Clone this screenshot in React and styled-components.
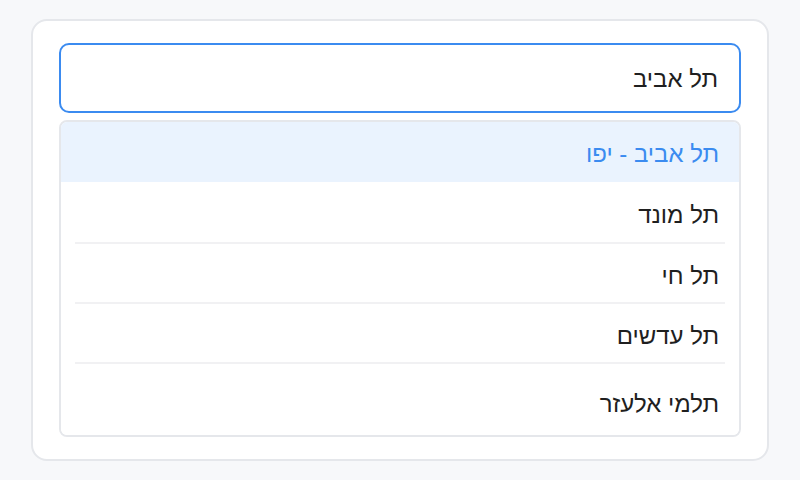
import React from 'react';
import styled, { createGlobalStyle } from 'styled-components';

const GlobalStyle = createGlobalStyle`
  html, body {
    margin: 0;
    padding: 0;
    background: #f7f8fa;
    font-family: 'Liberation Sans', Arial, sans-serif;
  }
  * { box-sizing: border-box; }
`

const Page = styled.div`
  width: 800px;
  height: 480px;
  padding: 19px 31px;
`

const Card = styled.div`
  background: #ffffff;
  border: 2px solid #e5e7eb;
  border-radius: 16px;
  padding: 22px 26px;
  display: flex;
  flex-direction: column;
  gap: 7px;
`

const Field = styled.div`
  height: 70px;
  border: 2px solid #3b8bf0;
  border-radius: 10px;
  display: flex;
  align-items: center;
  padding: 2px 21px 0;
  font-size: 24px;
  color: #1f1f1f;
  direction: rtl;
`

const List = styled.ul`
  list-style: none;
  margin: 0;
  padding: 0;
  border: 2px solid #e5e7eb;
  border-radius: 8px;
  overflow: hidden;
  direction: rtl;
`

const Item = styled.li`
  height: ${p => p.$h}px;
  display: flex;
  align-items: center;
  padding: ${p => p.$pt}px 20px 0;
  font-size: 24px;
  color: ${p => (p.$active ? '#3b8bf0' : '#1f1f1f')};
  background: ${p => (p.$active ? '#eaf3fe' : '#ffffff')};
`

const Divider = styled.li`
  height: 2px;
  margin: 0 14px;
  background: #f1f1f3;
`

const options = [
  { label: 'תל אביב - יפו', h: 60, pt: 4 },
  { label: 'תל מונד', h: 60, pt: 5 },
  { label: 'תל חי', h: 58, pt: 5 },
  { label: 'תל עדשים', h: 58, pt: 5 },
  { label: 'תלמי אלעזר', h: 71, pt: 9 },
];

const App = () => {
  return (
    <Page>
      <GlobalStyle />
      <Card>
        <Field>תל אביב</Field>
        <List>
          {options.map((o, i) => (
            <React.Fragment key={o.label}>
              {i > 1 && <Divider />}
              <Item $active={i === 0} $h={o.h} $pt={o.pt}>{o.label}</Item>
            </React.Fragment>
          ))}
        </List>
      </Card>
    </Page>
  );
}

export default App;
